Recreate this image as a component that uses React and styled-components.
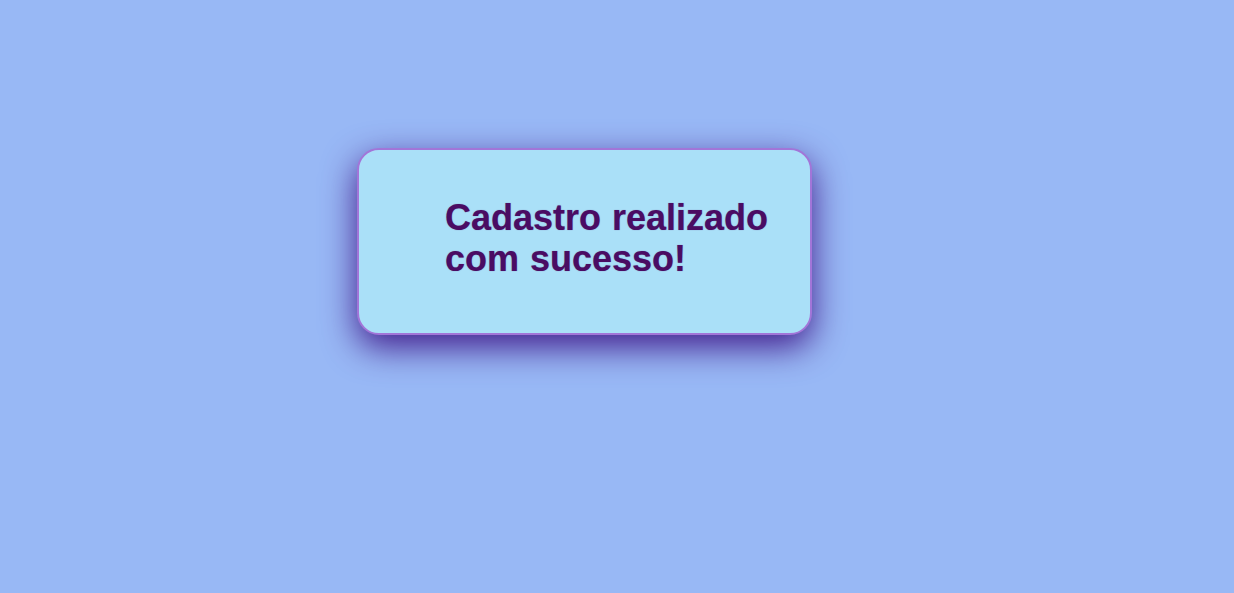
import React from 'react';
import styled, { createGlobalStyle } from 'styled-components';

const GlobalStyle = createGlobalStyle`
  html, body {
    margin: 0;
    padding: 0;
    background: #98b8f5;
  }
  body {
    font-family: "Liberation Sans", Arial, sans-serif;
  }
`;

const Page = styled.main`
  min-height: 593px;
  padding-top: 148px;
  padding-left: 357px;
  box-sizing: border-box;
`;

const Card = styled.div`
  width: 455px;
  height: 187px;
  box-sizing: border-box;
  padding: 47px 30px 0 86px;
  background: #aae0f8;
  border: 2px solid #a275d8;
  border-radius: 22px;
  box-shadow: 0 12px 34px rgba(66, 28, 140, 1);
`;

const Message = styled.h2`
  margin: 0;
  font-size: 36px;
  font-weight: 700;
  line-height: 41px;
  word-spacing: 1px;
  color: #4a0c63;
  text-shadow: 0 0 1px rgba(74, 12, 99, 0.5);
`;

const App = () => (
  <>
    <GlobalStyle />
    <Page>
      <Card>
        <Message>
          Cadastro realizado
          <br />
          com sucesso!
        </Message>
      </Card>
    </Page>
  </>
);

export default App;
